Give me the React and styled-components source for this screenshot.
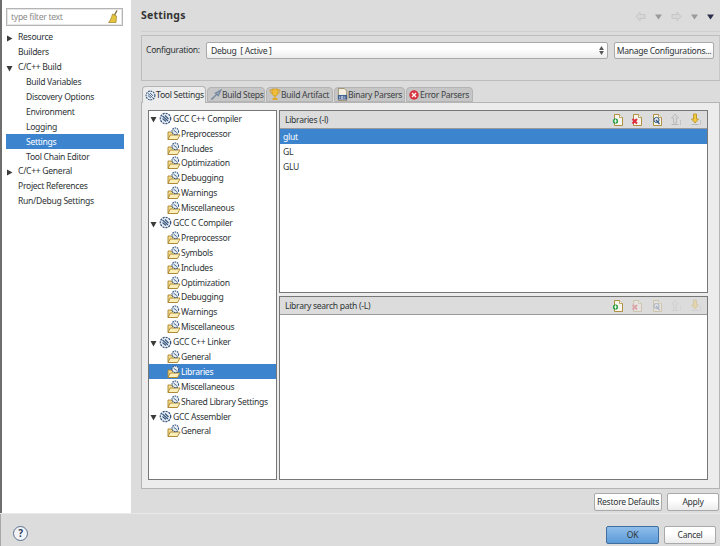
import React from 'react'
import styled, { createGlobalStyle } from 'styled-components'

const Global = createGlobalStyle`
  html, body { margin: 0; padding: 0; background: #dcdcdc; }
  body { font-family: "Noto Sans", "Open Sans", sans-serif; font-size: 8.6px; letter-spacing: -0.3px; color: #2e3436; }
  * { box-sizing: border-box; }
  svg { flex-shrink: 0; }
`

const GearIcon = ({ size = 13 }) => (
  <svg width={size} height={size} viewBox="0 0 13 13">
    <circle cx="6.5" cy="6.5" r="5.2" fill="#e8eef4" stroke="#35557e" strokeWidth="1.3" strokeDasharray="2 1" />
    <path d="M3.5 4 L9 9 M3.5 6.5 L7 9.5 M6 3.5 L9.5 7" stroke="#35557e" strokeWidth="1.1" />
  </svg>
)

const FolderIcon = () => (
  <svg width="14" height="14" viewBox="0 0 14 14">
    <path d="M1 5 H4 L5 6 H10 V12.5 H1 Z" fill="#f6dc8c" stroke="#a8852f" strokeWidth="0.9" />
    <path d="M1 12.5 L3.2 8 H13 L10.5 12.5 Z" fill="#fbeeb9" stroke="#a8852f" strokeWidth="0.9" />
    <circle cx="8.3" cy="4.3" r="3.3" fill="#e8eef4" stroke="#35557e" strokeWidth="1.1" strokeDasharray="1.6 0.8" />
    <path d="M6.6 3.2 L9.8 5.6" stroke="#35557e" strokeWidth="0.9" />
  </svg>
)

const ArrowIcon = ({ open }) => (
  <svg width="7" height="7" viewBox="0 0 7 7">
    {open
      ? <path d="M0.5 1 H6.5 L3.5 6.5 Z" fill="#3b3b3b" />
      : <path d="M1 0.5 L6.5 3.5 L1 6.5 Z" fill="#3b3b3b" />}
  </svg>
)

const BroomIcon = () => (
  <svg width="10" height="14" viewBox="0 0 10 14">
    <path d="M9 0.5 L6.5 5" stroke="#7a6a3a" strokeWidth="1.4" />
    <path d="M4.5 4 L8.5 6 L8 12.5 H0.5 C2.5 10.5 3.5 7.5 4.5 4 Z" fill="#e5c33f" stroke="#9a8126" strokeWidth="0.7" />
  </svg>
)

const BuildStepsIcon = () => (
  <svg width="12" height="12" viewBox="0 0 13 13">
    <path d="M1.5 11.5 L7 6 M6 4.5 L11.5 1.5 L9 7 Z" stroke="#7c8da3" strokeWidth="1.7" fill="#a9b8c9" />
  </svg>
)

const TrophyIcon = () => (
  <svg width="12" height="13" viewBox="0 0 12 13">
    <path d="M3 1 H9 V5 C9 7 7.5 8 6 8 C4.5 8 3 7 3 5 Z" fill="#f0bd3a" stroke="#c58e1e" strokeWidth="0.6" />
    <path d="M3 2 H1 C1 4.5 2 5.5 3.5 5.5 M9 2 H11 C11 4.5 10 5.5 8.5 5.5" fill="none" stroke="#d7a02a" strokeWidth="1" />
    <path d="M5.3 8 H6.7 V10 H8.5 V12 H3.5 V10 H5.3 Z" fill="#e0a92e" />
  </svg>
)

const BinaryIcon = () => (
  <svg width="11" height="13" viewBox="0 0 12 14">
    <path d="M1.5 0.5 H8 L10.5 3 V13.5 H1.5 Z" fill="#f4efe0" stroke="#8a7a50" strokeWidth="0.8" />
    <rect x="1" y="7.5" width="10" height="5" fill="#3f5f91" />
    <path d="M3 9 V11.5 M5 9 H6.5 V11.5 H5 Z M8.5 9 V11.5" stroke="#fff" strokeWidth="0.7" fill="none" />
  </svg>
)

const ErrorIcon = () => (
  <svg width="11" height="10" viewBox="0 0 11 10">
    <circle cx="5" cy="5" r="4.7" fill="#d9343f" />
    <path d="M3 3 L7 7 M7 3 L3 7" stroke="#fff" strokeWidth="1.4" />
  </svg>
)

const NavArrow = ({ back }) => (
  <svg width="11" height="11" viewBox="0 0 11 11">
    <path
      d={back ? 'M5 1 L1 5.5 L5 10 V7.5 H10 V3.5 H5 Z' : 'M6 1 L10 5.5 L6 10 V7.5 H1 V3.5 H6 Z'}
      fill="#d6d6d6"
      stroke="#c6c6c6"
    />
  </svg>
)

const SmallDown = ({ color }) => (
  <svg width="7" height="6" viewBox="0 0 7 6">
    <path d="M0 0.5 H7 L3.5 5.5 Z" fill={color} />
  </svg>
)

const Page = ({ children }) => (
  <svg width="11" height="12" viewBox="0 0 11 12">
    <path d="M2.5 0.5 H7.5 L10.5 3.5 V11.5 H2.5 Z" fill="#f8f6ec" stroke="currentColor" strokeWidth="0.9" />
    <path d="M7.5 0.5 V3.5 H10.5" fill="#fff" stroke="currentColor" strokeWidth="0.7" />
    {children}
  </svg>
)

const ToolIcon = ({ kind, off }) => {
  const faded = off ? 0.3 : 1
  if (kind === 'add') return (
    <IconWrap $o={faded}><Page><circle cx="3.5" cy="7" r="2.6" fill="#1c9a3b" /><path d="M1.8 7 H5.2 M3.5 5.3 V8.7" stroke="#fff" strokeWidth="0.9" /></Page></IconWrap>
  )
  if (kind === 'del') return (
    <IconWrap $o={faded}><Page><path d="M1.5 5 L6 9.5 M6 5 L1.5 9.5" stroke="#de2b3a" strokeWidth="2" /></Page></IconWrap>
  )
  if (kind === 'edit') return (
    <IconWrap $o={faded}><Page><circle cx="5.5" cy="6" r="2.6" fill="#e8eef4" stroke="#35557e" /><path d="M5 6 L8.5 10" stroke="#35557e" strokeWidth="1.3" /></Page></IconWrap>
  )
  return (
    <IconWrap $o={faded} $c="#c9a030">
      <svg width="11" height="13" viewBox="0 0 11 13">
        {kind === 'up'
          ? <path d="M5 1 L8.5 5 H6.5 V10 H3.5 V5 H1.5 Z" fill="#d8d8d8" stroke="#b5b5b5" strokeWidth="0.8" />
          : <path d="M5 10 L8.5 6 H6.5 V1 H3.5 V6 H1.5 Z" fill="#f2c83e" stroke="#b88f1e" strokeWidth="0.8" />}
        <path d="M1.5 11.5 H8.5" stroke="#b5b5b5" /><path d="M10.5 7 V12" stroke="#c4c4c4" />
      </svg>
    </IconWrap>
  )
}

const IconWrap = styled.span`
  display: flex;
  width: 19.5px;
  justify-content: center;
  color: ${p => p.$c || '#a8852f'};
  opacity: ${p => p.$o};
`

const Window = styled.div`
  width: 720px;
  height: 546px;
  overflow: hidden;
  display: flex;
  flex-direction: column;
  background: #dcdcdc;
`
const Main = styled.div`
  height: 514px;
  display: flex;
  border-bottom: 1px solid #e8e8e8;
`
const Sidebar = styled.div`
  width: 131px;
  background: #fff;
  border-left: 2px solid #6e6e6e;
  padding: 8px 0 0 4px;
`
const FilterBox = styled.div`
  width: 117px;
  height: 18px;
  border: 1px solid #b4b4b4;
  box-shadow: inset 0 0 0 1px #e6e6e6;
  display: flex;
  align-items: center;
  justify-content: space-between;
  padding: 0 4px;
  color: #8c8c8c;
  margin-bottom: 4px;
`
const NavRow = styled.div`
  height: 14.9px;
  width: 118px;
  display: flex;
  align-items: center;
  white-space: nowrap;
  padding-left: ${p => p.$depth === 2 ? 20 : 12}px;
  position: relative;
  background: ${p => p.$on ? '#3d84cf' : 'transparent'};
  color: ${p => p.$on ? '#fff' : '#2e3436'};
`
const NavArrowBox = styled.span`
  position: absolute;
  left: 0;
  top: 3px;
`
const Content = styled.div`
  flex: 1;
  padding-left: 10px;
  display: flex;
  flex-direction: column;
`
const Header = styled.div`
  height: 32px;
  padding: 0 6px 0 0;
  display: flex;
  align-items: center;
  justify-content: space-between;
  border-bottom: 1px solid #cfcfcf;
`
const Title = styled.div`
  font-size: 10.5px;
  font-weight: 700;
  color: #333;
  letter-spacing: 0.2px;
  margin-top: -2px;
`
const NavTools = styled.div`
  display: flex;
  align-items: center;
  gap: 9px;
  margin-top: 2px;
`
const ConfigGroup = styled.div`
  margin-top: 3px;
  height: 46px;
  border: 1px solid #bdbdbd;
  border-right-color: #c8c8c8;
  padding: 6px 4px 0 4px;
  display: flex;
  align-items: flex-start;
`
const ConfigLabel = styled.span`
  line-height: 17px;
  width: 60px;
`
const Combo = styled.div`
  width: 402px;
  height: 17px;
  padding: 0 3px 0 4px;
  border: 1px solid #a9a9a9;
  border-radius: 2px;
  background: linear-gradient(#fff 40%, #ececec);
  display: flex;
  align-items: center;
  justify-content: space-between;
  white-space: pre;
`
const Spin = styled.span`
  display: flex;
  flex-direction: column;
  gap: 1px;
  font-size: 0;
`
const Button = styled.div`
  height: ${p => p.$h || 18}px;
  width: ${p => p.$w}px;
  margin-left: ${p => p.$ml || 0}px;
  border: 1px solid ${p => p.$primary ? '#3f6f9f' : '#a9a9a9'};
  border-radius: 2px;
  background: ${p => p.$primary ? 'linear-gradient(#8fbdea, #5b9ad8)' : 'linear-gradient(#fff 40%, #ececec)'};
  display: flex;
  align-items: center;
  justify-content: center;
  white-space: nowrap;
`
const TabBar = styled.div`
  margin-top: 5px;
  height: 16px;
  display: flex;
  align-items: flex-end;
  padding-left: 1px;
  gap: 1px;
`
const Tab = styled.div`
  width: ${p => p.$w}px;
  height: ${p => p.$on ? 17 : 15}px;
  margin-bottom: ${p => p.$on ? -1 : 0}px;
  position: relative;
  z-index: ${p => p.$on ? 1 : 0};
  display: flex;
  align-items: center;
  padding-left: 2px;
  white-space: nowrap;
  background: ${p => p.$on ? '#ececec' : '#c6c6c6'};
  border: 1px solid #b4b4b4;
  border-bottom: ${p => p.$on ? 'none' : '1px solid #b4b4b4'};
  border-radius: 4px 4px 0 0;
  color: ${p => p.$on ? '#2e3436' : '#3c4143'};
`
const TabBody = styled.div`
  height: 387px;
  background: #ececec;
  border: 1px solid #b4b4b4;
  padding: 7px 11px 8px 6px;
  display: flex;
  gap: 2px;
`
const TreePanel = styled.div`
  width: 129px;
  background: #fff;
  border: 1px solid #777;
  overflow: hidden;
`
const TreeRow = styled.div`
  height: 14.9px;
  display: flex;
  align-items: center;
  position: relative;
  gap: ${p => p.$leaf ? 0 : 1}px;
  white-space: nowrap;
  padding-left: ${p => p.$leaf ? 18 : 10}px;
  background: ${p => p.$on ? '#3d84cf' : 'transparent'};
  color: ${p => p.$on ? '#fff' : '#2e3436'};
`
const TreeArrow = styled.span`
  position: absolute;
  left: 1px;
  top: 3px;
`
const Rows = styled.div`
  margin-top: 0.3px;
`
const RightCol = styled.div`
  flex: 1;
  display: flex;
  flex-direction: column;
  gap: 3px;
`
const ListPanel = styled.div`
  height: ${p => p.$h}px;
  background: #fff;
  border: 1px solid #777;
`
const ListHead = styled.div`
  height: 18px;
  background: #dcdcdc;
  border-bottom: 1px solid #9a9a9a;
  display: flex;
  align-items: center;
  justify-content: space-between;
  padding: 1px 2px 0 5px;
`
const IconGroup = styled.div`
  display: flex;
  align-items: center;
  margin-top: -1px;
`
const ListRow = styled.div`
  height: 15px;
  padding: 1px 0 0 3px;
  display: flex;
  align-items: center;
  background: ${p => p.$on ? '#3d84cf' : 'transparent'};
  color: ${p => p.$on ? '#fff' : '#2e3436'};
`
const ApplyRow = styled.div`
  margin-top: 4px;
  padding-right: 1px;
  display: flex;
  justify-content: flex-end;
`
const Footer = styled.div`
  flex: 1;
  display: flex;
  align-items: flex-start;
  justify-content: space-between;
  padding: 12px 4px 0 13px;
  border-left: 1px solid #a8a8a8;
`
const FooterButtons = styled.div`
  display: flex;
`
const Help = styled.span`
  width: 15px;
  height: 15px;
  margin-left: -1px;
  border-radius: 50%;
  border: 1.5px solid #5b7190;
  background: #f1f3f6;
  color: #2d3f5e;
  font-weight: 700;
  font-size: 10px;
  line-height: 12px;
  text-align: center;
`

const navItems = [
  { t: 'Resource', arrow: 'closed' },
  { t: 'Builders' },
  { t: 'C/C++ Build', arrow: 'open' },
  { t: 'Build Variables', depth: 2 },
  { t: 'Discovery Options', depth: 2 },
  { t: 'Environment', depth: 2 },
  { t: 'Logging', depth: 2 },
  { t: 'Settings', depth: 2, on: true },
  { t: 'Tool Chain Editor', depth: 2 },
  { t: 'C/C++ General', arrow: 'closed' },
  { t: 'Project References' },
  { t: 'Run/Debug Settings' },
]

const tree = [
  ['GCC C++ Compiler', ['Preprocessor', 'Includes', 'Optimization', 'Debugging', 'Warnings', 'Miscellaneous']],
  ['GCC C Compiler', ['Preprocessor', 'Symbols', 'Includes', 'Optimization', 'Debugging', 'Warnings', 'Miscellaneous']],
  ['GCC C++ Linker', ['General', 'Libraries', 'Miscellaneous', 'Shared Library Settings']],
  ['GCC Assembler', ['General']],
]

const tabs = [
  { t: 'Tool Settings', w: 64, on: true, icon: <GearIcon size={11} /> },
  { t: 'Build Steps', w: 58, icon: <BuildStepsIcon /> },
  { t: 'Build Artifact', w: 67, icon: <TrophyIcon /> },
  { t: 'Binary Parsers', w: 71, icon: <BinaryIcon /> },
  { t: 'Error Parsers', w: 67, icon: <ErrorIcon /> },
]

export default function App() {
  return (
    <Window>
      <Global />
      <Main>
        <Sidebar>
          <FilterBox>type filter text<BroomIcon /></FilterBox>
          {navItems.map(n => (
            <NavRow key={n.t} $depth={n.depth} $on={n.on}>
              {n.arrow && <NavArrowBox><ArrowIcon open={n.arrow === 'open'} /></NavArrowBox>}
              {n.t}
            </NavRow>
          ))}
        </Sidebar>
        <Content>
          <Header>
            <Title>Settings</Title>
            <NavTools>
              <NavArrow back /><SmallDown color="#9a9a9a" />
              <NavArrow /><SmallDown color="#9a9a9a" />
              <SmallDown color="#2b2f4a" />
            </NavTools>
          </Header>
          <ConfigGroup>
            <ConfigLabel>Configuration:</ConfigLabel>
            <Combo>
              {'Debug  [ Active ]'}
              <Spin>
                <svg width="5" height="4" viewBox="0 0 6 5"><path d="M3 0 L6 5 H0 Z" fill="#555" /></svg>
                <svg width="5" height="4" viewBox="0 0 6 5"><path d="M0 0 H6 L3 5 Z" fill="#555" /></svg>
              </Spin>
            </Combo>
            <Button $w={100} $ml={6} $h={17}>Manage Configurations...</Button>
          </ConfigGroup>
          <TabBar>
            {tabs.map(t => (
              <Tab key={t.t} $w={t.w} $on={t.on}>{t.icon}{t.t}</Tab>
            ))}
          </TabBar>
          <TabBody>
            <TreePanel>
              <Rows>
                {tree.map(([group, kids]) => (
                  <React.Fragment key={group}>
                    <TreeRow>
                      <TreeArrow><ArrowIcon open /></TreeArrow>
                      <GearIcon />{group}
                    </TreeRow>
                    {kids.map(k => (
                      <TreeRow key={k} $leaf $on={group === 'GCC C++ Linker' && k === 'Libraries'}>
                        <FolderIcon />{k}
                      </TreeRow>
                    ))}
                  </React.Fragment>
                ))}
              </Rows>
            </TreePanel>
            <RightCol>
              <ListPanel $h={183}>
                <ListHead>
                  Libraries (-l)
                  <IconGroup>
                    <ToolIcon kind="add" />
                    <ToolIcon kind="del" />
                    <ToolIcon kind="edit" />
                    <ToolIcon kind="up" />
                    <ToolIcon kind="down" />
                  </IconGroup>
                </ListHead>
                <ListRow $on>glut</ListRow>
                <ListRow>GL</ListRow>
                <ListRow>GLU</ListRow>
              </ListPanel>
              <ListPanel $h={184}>
                <ListHead>
                  Library search path (-L)
                  <IconGroup>
                    <ToolIcon kind="add" />
                    <ToolIcon kind="del" off />
                    <ToolIcon kind="edit" off />
                    <ToolIcon kind="up" off />
                    <ToolIcon kind="down" off />
                  </IconGroup>
                </ListHead>
              </ListPanel>
            </RightCol>
          </TabBody>
          <ApplyRow>
            <Button $w={68}>Restore Defaults</Button>
            <Button $w={52} $ml={5}>Apply</Button>
          </ApplyRow>
        </Content>
      </Main>
      <Footer>
        <Help>?</Help>
        <FooterButtons>
          <Button $w={53} $primary>OK</Button>
          <Button $w={52} $ml={5}>Cancel</Button>
        </FooterButtons>
      </Footer>
    </Window>
  )
}
